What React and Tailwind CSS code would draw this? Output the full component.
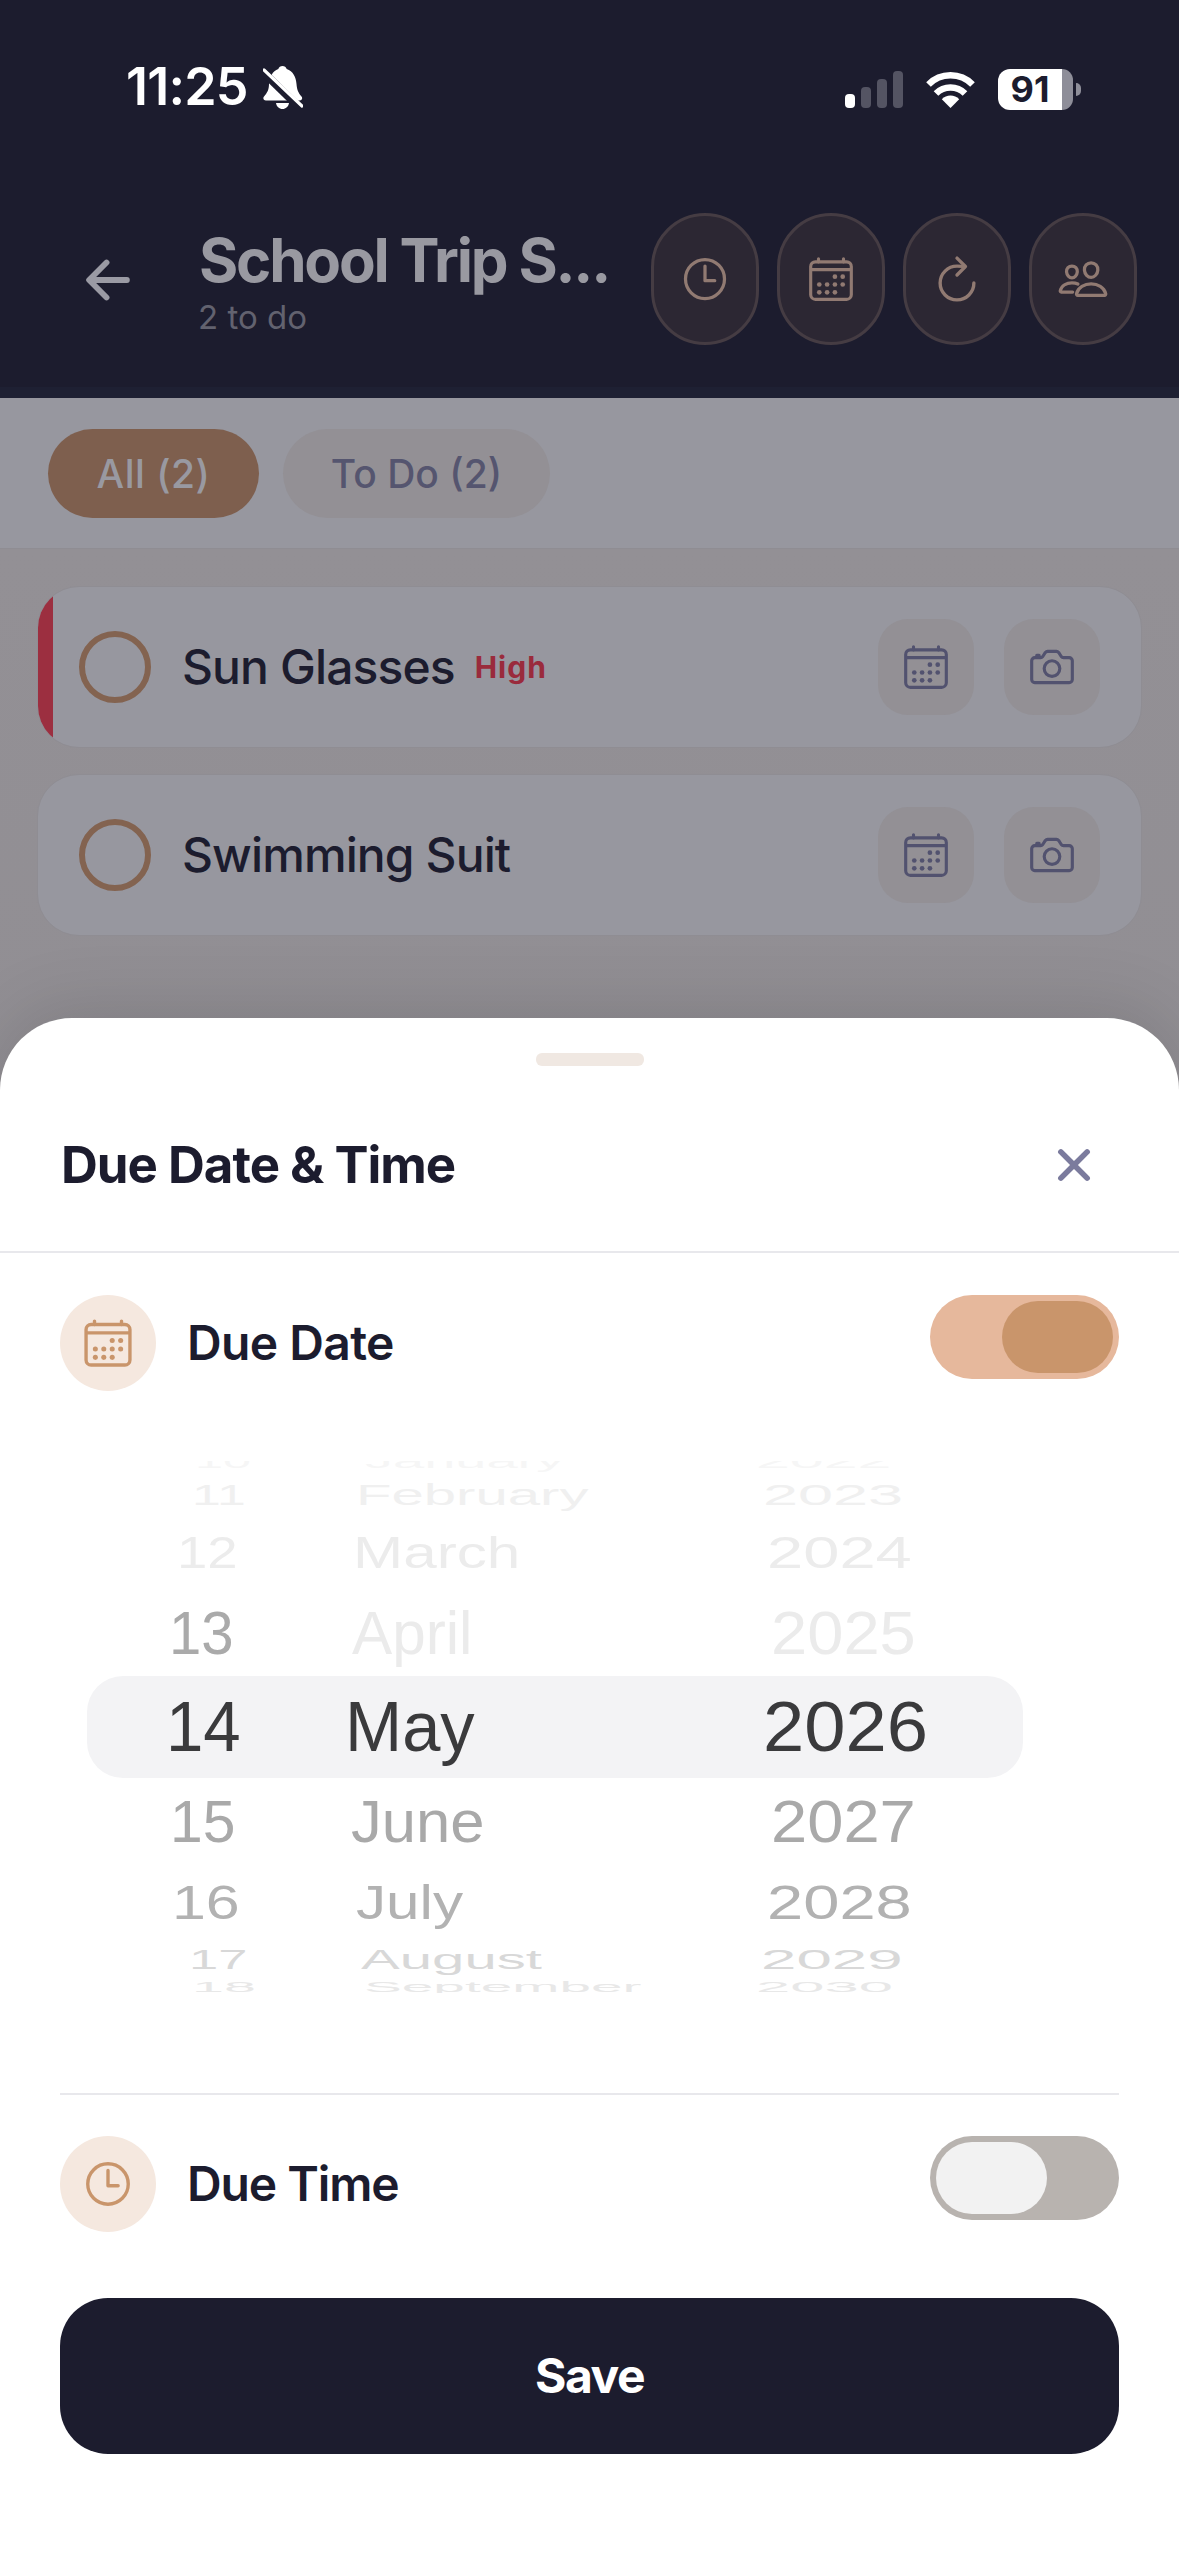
import React from "react";
import {
  IoArrowBack,
  IoCalendarOutline,
  IoCameraOutline,
  IoClose,
  IoPeopleOutline,
  IoRefreshOutline,
  IoTimeOutline,
} from "react-icons/io5";

const colWidths = ["w-[290px]", "w-[410px]", "flex-1"];

const wheel = [
  { h: "h-[18px]", sy: "scale-y-[.3]", c: ["text-[#f6f6f6]", "text-[#f6f6f6]", "text-[#f6f6f6]"], cells: [["10", "pl-[195px]", "scale-x-[.72]"], ["January", "pl-[75px]", "scale-x-[.8]"], ["2022", "pl-[56px]", "scale-x-[.87]"]] },
  { h: "h-[37px]", sy: "scale-y-[.42]", c: ["text-[#f0f0f0]", "text-[#f0f0f0]", "text-[#f0f0f0]"], cells: [["11", "pl-[192px]", "scale-x-[.74]"], ["February", "pl-[66px]", "scale-x-[.83]"], ["2023", "pl-[63px]", "scale-x-[.9]"]] },
  { h: "h-[63px]", sy: "scale-y-[.64]", c: ["text-[#ececec]", "text-[#ececec]", "text-[#ececec]"], cells: [["12", "pl-[177px]", "scale-x-[.78]"], ["March", "pl-[63px]", "scale-x-[.86]"], ["2024", "pl-[67px]", "scale-x-[.93]"]] },
  { h: "h-[86px]", sy: "scale-y-[.86]", c: ["text-[#aaaaaa]", "text-[#ebebeb]", "text-[#ebebeb]"], cells: [["13", "pl-[169px]", "scale-x-[.83]"], ["April", "pl-[62px]", "scale-x-[.86]"], ["2025", "pl-[71px]", "scale-x-[.93]"]] },
  { h: "h-[97px]", sy: "scale-y-[1]", c: ["text-[#3a3a3c]", "text-[#3a3a3c]", "text-[#3a3a3c]"], cells: [["14", "pl-[166px]", "scale-x-[.96]"], ["May", "pl-[55px]", "scale-x-[.98]"], ["2026", "pl-[63px]", "scale-x-[1.06]"]] },
  { h: "h-[91px]", sy: "scale-y-[.84]", c: ["text-[#a9a9a9]", "text-[#a9a9a9]", "text-[#a9a9a9]"], cells: [["15", "pl-[170px]", "scale-x-[.84]"], ["June", "pl-[61px]", "scale-x-[.88]"], ["2027", "pl-[71px]", "scale-x-[.93]"]] },
  { h: "h-[77px]", sy: "scale-y-[.68]", c: ["text-[#b2b2b2]", "text-[#b2b2b2]", "text-[#b2b2b2]"], cells: [["16", "pl-[172px]", "scale-x-[.87]"], ["July", "pl-[66px]", "scale-x-[.86]"], ["2028", "pl-[67px]", "scale-x-[.93]"]] },
  { h: "h-[50px]", sy: "scale-y-[.4]", c: ["text-[#d8d8d8]", "text-[#d8d8d8]", "text-[#d8d8d8]"], cells: [["17", "pl-[189px]", "scale-x-[.75]"], ["August", "pl-[71px]", "scale-x-[.83]"], ["2029", "pl-[61px]", "scale-x-[.91]"]] },
  { h: "h-[23px]", sy: "scale-y-[.2]", c: ["text-[#e8e8e8]", "text-[#e8e8e8]", "text-[#e8e8e8]"], cells: [["18", "pl-[192px]", "scale-x-[.82]"], ["September", "pl-[74px]", "scale-x-[.81]"], ["2030", "pl-[56px]", "scale-x-[.88]"]] },
];

function Bell() {
  return (
    <svg viewBox="0 0 40 43" className="w-[40px] h-[43px]">
      <path d="M19.5 0c2 0 3.6 1.2 4.2 3C30 5 33 11 33.5 18c.4 6 2 9 5 12.5 1.3 1.6.7 4-2 4H3c-2.700 0-3.300-2.400-2-4C4 27 6 24 6 18 6.500 11 9.500 5 15.300 3c.6-1.800 2.200-3 4.200-3zM13 37h13c-.5 3.500-3.200 6-6.500 6S13.500 40.500 13 37z" fill="#fff" />
      <path d="M-1 5 L37 42" stroke="#1c1c2e" strokeWidth="8" />
      <path d="M1 4 L39 40" stroke="#fff" strokeWidth="3.200" strokeLinecap="round" />
    </svg>
  );
}

function Wifi() {
  return (
    <svg viewBox="0 0 49 37" className="w-[49px] h-[37px]" fill="none">
      <path d="M2.500 13.500a31 31 0 0 1 44 0" stroke="#fff" strokeWidth="6.500" />
      <path d="M10 22.500a20.500 20.500 0 0 1 29 0" stroke="#fff" strokeWidth="6.500" />
      <path d="M24.500 37 15.800 28.200a12.300 12.300 0 0 1 17.400 0z" fill="#fff" />
    </svg>
  );
}

function HeaderButton({ children }) {
  return (
    <div className="w-[108px] h-[132px] rounded-[54px] bg-[#2c2733] border-[3px] border-[#453c43] flex items-center justify-center text-[#917a72]">
      {children}
    </div>
  );
}

function TaskCard({ title, high }) {
  return (
    <div className="h-[162px] rounded-[42px] bg-[#97979f] border border-[#8f8d93] overflow-hidden flex items-stretch">
      {high && <div className="w-[15px] bg-[#9c2f40] shrink-0" />}
      <div className={"flex-1 flex items-center pr-[41px] " + (high ? "pl-[26px]" : "pl-[41px]")}>
        <div className="w-[72px] h-[72px] rounded-full border-[6px] border-[#836350] shrink-0" />
        <div className="ml-[31px] flex-1 flex items-center gap-[20px]">
          <span className="text-[48px] leading-[60px] font-medium tracking-[-0.900px] text-[#1c1c2e]">{title}</span>
          {high && <span className="text-[30px] leading-[40px] font-bold tracking-[1px] text-[#9a2b3c]">High</span>}
        </div>
        <div className="flex gap-[30px] text-[#52526f]">
          <div className="w-[96px] h-[96px] rounded-[30px] bg-[#939095] flex items-center justify-center">
            <IoCalendarOutline size={50} />
          </div>
          <div className="w-[96px] h-[96px] rounded-[30px] bg-[#939095] flex items-center justify-center">
            <IoCameraOutline size={50} />
          </div>
        </div>
      </div>
    </div>
  );
}

function Toggle({ on }) {
  return (
    <div
      className={
        "w-[189px] h-[84px] rounded-full flex items-center px-[6px] " +
        (on ? "bg-[#e6b89c] justify-end" : "bg-[#b8b3af] justify-start")
      }
    >
      <div className={"w-[111px] h-[72px] rounded-full " + (on ? "bg-[#c9956b]" : "bg-[#f2f2f2]")} />
    </div>
  );
}

function OptionRow({ icon, label, on, tracking }) {
  return (
    <div className="flex items-start justify-between px-[60px]">
      <div className="flex items-center gap-[31px]">
        <div className="w-[96px] h-[96px] rounded-full bg-[#f5e8df] flex items-center justify-center text-[#c9956b]">
          {icon}
        </div>
        <span className={"text-[48px] leading-[60px] font-semibold text-[#1c1c2e] " + tracking}>{label}</span>
      </div>
      <Toggle on={on} />
    </div>
  );
}

export default function App() {
  return (
    <div className="relative w-[1179px] h-[2556px] overflow-hidden bg-[#918f94] font-['Inter',sans-serif]">
      <header className="h-[398px] bg-[#1c1c2e] border-b-[11px] border-[#1e2033] flex flex-col">
        <div className="h-[213px] shrink-0 flex items-start justify-between pt-[61px] pl-[126px] pr-[98px]">
          <div className="flex items-center gap-[15px]">
            <span className="text-[52px] leading-[52px] font-semibold text-white tracking-[-0.800px]">11:25</span>
            <Bell />
          </div>
          <div className="flex items-center gap-[23px] pt-[8px]">
            <div className="flex items-end gap-[6px] h-[37px]">
              <div className="w-[10px] h-[14px] rounded-[4px] bg-white" />
              <div className="w-[10px] h-[21px] rounded-[4px] bg-[#545463]" />
              <div className="w-[10px] h-[29px] rounded-[4px] bg-[#545463]" />
              <div className="w-[10px] h-[37px] rounded-[4px] bg-[#545463]" />
            </div>
            <Wifi />
            <div className="flex items-center gap-[3px]">
              <div className="w-[75px] h-[41px] flex">
                <span className="w-[64px] rounded-l-[12px] bg-white text-center text-[36px] leading-[41px] font-bold text-[#1c1c2e]">91</span>
                <div className="flex-1 rounded-r-[12px] bg-[#8e8e99]" />
              </div>
              <div className="w-[5px] h-[13px] rounded-r-[5px] bg-[#8e8e99]" />
            </div>
          </div>
        </div>
        <div className="flex items-start pl-[82px]">
          <div className="w-[117px] h-[132px] flex items-center text-[#9a9aa4]">
            <IoArrowBack size={62} className="-ml-[5px] mt-[2px]" />
          </div>
          <div className="w-[452px] pt-[10px]">
            <div className="text-[60px] leading-[74px] font-bold text-[#9999a1] tracking-[-2.200px] whitespace-nowrap">School Trip S...</div>
            <div className="text-[33px] leading-[40px] text-[#62626f] -ml-[1px]">2 to do</div>
          </div>
          <div className="flex gap-[18px]">
            <HeaderButton><IoTimeOutline size={52} /></HeaderButton>
            <HeaderButton><IoCalendarOutline size={50} /></HeaderButton>
            <HeaderButton><IoRefreshOutline size={54} /></HeaderButton>
            <HeaderButton><IoPeopleOutline size={52} /></HeaderButton>
          </div>
        </div>
      </header>

      <div className="h-[151px] bg-[#97979f] border-b border-[#8f8d93] px-[48px] pt-[31px] flex items-start gap-[24px]">
        <div className="h-[89px] w-[211px] pt-[2px] rounded-full bg-[#7e5f4e] flex items-center justify-center text-[39px] font-medium tracking-[0.500px] text-[#9999a1]">All (2)</div>
        <div className="h-[89px] w-[267px] pt-[2px] rounded-full bg-[#939095] flex items-center justify-center text-[39px] font-medium text-[#55556f]">To Do (2)</div>
      </div>

      <div className="h-[2007px] bg-gradient-to-b from-[#939095] to-[#8c8a8f] px-[37px] pt-[37px] flex flex-col gap-[26px]">
        <TaskCard title="Sun Glasses" high />
        <TaskCard title="Swimming Suit" />
      </div>

      <section className="absolute inset-x-0 bottom-0 h-[1538px] bg-white rounded-t-[72px] shadow-[0_-10px_70px_rgba(0,0,0,0.12)]">
        <div className="mx-auto mt-[35px] w-[108px] h-[13px] rounded-[6px] bg-[#f0e8e2]" />
        <div className="h-[187px] pt-[12px] border-b-2 border-[#e8e8ec] flex items-center justify-between pl-[61px] pr-[84px]">
          <h2 className="text-[51px] leading-[60px] font-bold text-[#1c1c2e] tracking-[-1px]">Due Date &amp; Time</h2>
          <IoClose size={60} className="text-[#7b7b9d] -mr-[9px]" />
        </div>

        <div className="mt-[42px]">
          <OptionRow on label="Due Date" tracking="tracking-[-0.600px]" icon={<IoCalendarOutline size={54} />} />
        </div>

        <div className="relative mt-[70px] h-[532px] overflow-hidden font-['Liberation_Sans',sans-serif]">
          <div className="absolute left-[87px] top-[215px] w-[936px] h-[102px] rounded-[36px] bg-[#f3f3f5]" />
          <div className="relative">
            {wheel.map((row) => (
              <div key={row.cells[0][0]} className={"flex " + row.h}>
                {row.cells.map(([text, pl, sx], i) => (
                  <div key={text} className={"flex items-end whitespace-nowrap " + colWidths[i] + " " + pl}>
                    <span className={"inline-block shrink-0 text-[70px] leading-[70px] origin-[0_59px] " + sx + " " + row.sy + " " + row.c[i]}>
                      {text}
                    </span>
                  </div>
                ))}
              </div>
            ))}
          </div>
        </div>

        <div className="mx-[60px] mt-[100px] h-[2px] bg-[#e8e8ec]" />

        <div className="mt-[41px]">
          <OptionRow label="Due Time" tracking="tracking-[-1.100px]" icon={<IoTimeOutline size={54} />} />
        </div>

        <button className="mx-[60px] mt-[66px] w-[1059px] h-[156px] rounded-[48px] bg-[#1c1c2e] text-white text-[48px] font-bold tracking-[-1.500px]">Save</button>
      </section>
    </div>
  );
}
